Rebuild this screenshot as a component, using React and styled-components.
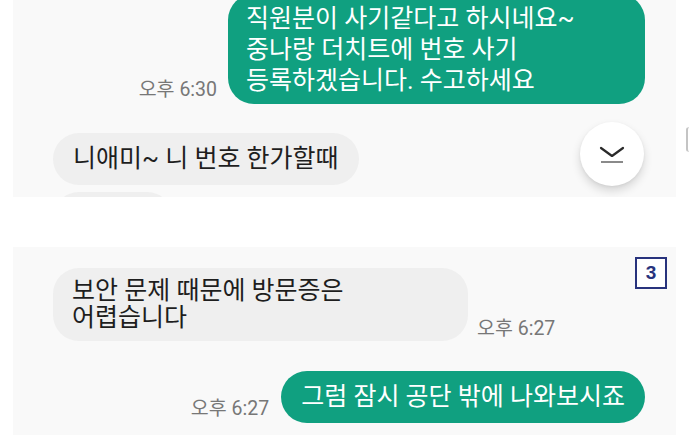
import React from "react";
import styled, { createGlobalStyle } from "styled-components";

const Global = createGlobalStyle`
  html, body { margin: 0; padding: 0; background: #ffffff; }
  body { width: 689px; height: 435px; overflow: hidden; font-family: "Roboto", "Noto Sans CJK KR", sans-serif; }
`;

const Page = styled.div`
  position: relative;
  width: 689px;
  height: 435px;
  padding-left: 13px;
  box-sizing: border-box;
  display: flex;
  flex-direction: column;
  gap: 50px;
`;

const Panel = styled.div`
  position: relative;
  width: 663px;
  height: ${(p) => p.$h}px;
  background: #f9f9f9;
  overflow: hidden;
  box-sizing: border-box;
  padding: ${(p) => p.$pad};
  display: flex;
  flex-direction: column;
`;

const Row = styled.div`
  display: flex;
  align-items: flex-end;
  justify-content: ${(p) => (p.$mine ? "flex-end" : "flex-start")};
  gap: ${(p) => p.$gap || 10}px;
  margin-top: ${(p) => p.$mt || 0}px;
`;

const Bubble = styled.div`
  flex: none;
  box-sizing: border-box;
  width: ${(p) => (p.$w ? `${p.$w}px` : "auto")};
  height: ${(p) => (p.$h ? `${p.$h}px` : "auto")};
  padding: ${(p) => p.$pad || "10px 20px"};
  border-radius: 26px;
  background: ${(p) => (p.$mine ? "#10a080" : "#efefef")};
  color: ${(p) => (p.$mine ? "#ffffff" : "#1e1e1e")};
  font-size: 25px;
  line-height: ${(p) => p.$lh || 31}px;
  white-space: nowrap;
`;

const Time = styled.span`
  flex: none;
  font-size: 19.5px;
  line-height: 19px;
  color: #777777;
  margin-bottom: ${(p) => p.$mb || 4}px;
`;

const ScrollButton = styled.div`
  position: absolute;
  left: 567px;
  top: 122px;
  width: 64px;
  height: 64px;
  border-radius: 50%;
  background: #ffffff;
  box-shadow: 0 5px 10px rgba(0, 0, 0, 0.14), 0 1px 3px rgba(0, 0, 0, 0.06);
  display: flex;
  align-items: center;
  justify-content: center;
`;

const Badge = styled.div`
  position: absolute;
  right: 9px;
  top: 10px;
  width: 32px;
  height: 32px;
  box-sizing: border-box;
  border: 2px solid #28337d;
  background: #ffffff;
  color: #28337d;
  font-family: "Liberation Sans", Arial, sans-serif;
  font-weight: bold;
  font-size: 19px;
  display: flex;
  align-items: center;
  justify-content: center;
`;

const EdgeMark = styled.div`
  position: absolute;
  left: 686px;
  top: 127px;
  width: 4px;
  height: 23px;
  border-left: 2px solid #c4c4c4;
  border-top: 1px solid #d8d8d8;
  border-bottom: 1px solid #d8d8d8;
  border-radius: 3px 0 0 3px;
`;

export default function App() {
  return (
    <>
      <Global />
      <Page>
        <Panel $h={197} $pad="0 31px 0 40px">
          <Row $mine $gap={11} $mt={-6}>
            <Time $mb={5}>오후 6:30</Time>
            <Bubble $mine $w={417} $pad="9px 18px 8px">
              직원분이 사기같다고 하시네요~
              <br />
              중나랑 더치트에 번호 사기
              <br />
              등록하겠습니다. 수고하세요
            </Bubble>
          </Row>
          <Row $mt={29}>
            <Bubble $h={52}>니애미~ 니 번호 한가할때</Bubble>
          </Row>
          <Row $mt={7}>
            <Bubble $w={120} $h={52} />
          </Row>
          <ScrollButton>
            <svg width="64" height="64" viewBox="0 0 64 64">
              <polyline points="21,26 32,34 43,26" fill="none" stroke="#2a2a2a" strokeWidth="2.2" strokeLinecap="round" strokeLinejoin="round" />
              <line x1="21" y1="40" x2="43" y2="40" stroke="#8a8a8a" strokeWidth="2" />
            </svg>
          </ScrollButton>
        </Panel>
        <Panel $h={188} $pad="21px 31px 0 40px">
          <Row $gap={9}>
            <Bubble $w={415} $h={73} $lh={27} $pad="9px 19px">
              보안 문제 때문에 방문증은
              <br />
              어렵습니다
            </Bubble>
            <Time $mb={3}>오후 6:27</Time>
          </Row>
          <Row $mine $gap={12} $mt={30}>
            <Time $mb={5}>오후 6:27</Time>
            <Bubble $mine $h={52}>그럼 잠시 공단 밖에 나와보시죠</Bubble>
          </Row>
          <Badge>3</Badge>
        </Panel>
        <EdgeMark />
      </Page>
    </>
  );
}
